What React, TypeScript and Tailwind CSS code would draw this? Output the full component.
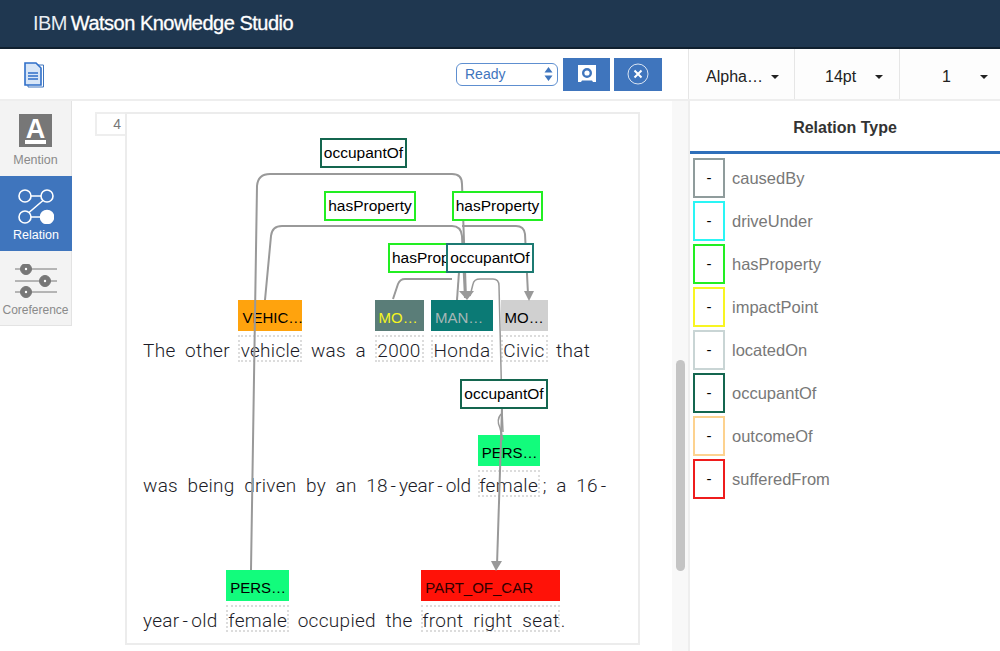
import React from 'react';

const SANS = "font-['Liberation_Sans',Arial,sans-serif]";
const DOC_LINE = "absolute left-[16px] flex items-center gap-[9.5px] font-['Roboto',Arial,sans-serif] text-[19px] font-light leading-[27px] tracking-[0.3px] text-[#1c1c28]";

interface Relation {
  name: string;
  border: string;
}

const relationTypes: Relation[] = [
  { name: 'causedBy', border: 'border-[#8f9c9c]' },
  { name: 'driveUnder', border: 'border-[#2af5f5]' },
  { name: 'hasProperty', border: 'border-[#22ee22]' },
  { name: 'impactPoint', border: 'border-[#f8f522]' },
  { name: 'locatedOn', border: 'border-[#c9d5d5]' },
  { name: 'occupantOf', border: 'border-[#14664f]' },
  { name: 'outcomeOf', border: 'border-[#fdd28f]' },
  { name: 'sufferedFrom', border: 'border-[#ee1c1c]' },
];

// a word of the document, with the dotted box and the mention label over it
const Mention = ({
  word,
  label,
  box,
  width,
}: {
  word: string;
  label: string;
  box: string;
  width: string;
}) => (
  <span className={`relative mx-[-1px] flex h-[27px] -translate-y-[2px] items-center justify-center border-2 border-dotted border-[#dcdcdc] ${width}`}>
    <span className="translate-y-[2px]">{word}</span>
    <span className={`absolute left-[-2px] right-[-2px] top-[-37px] flex h-[31px] items-center overflow-hidden whitespace-nowrap pl-[4px] pt-[4px] text-[15px] leading-none tracking-normal ${SANS} ${box}`}>
      {label}
    </span>
  </span>
);

const RelationLabel = ({ text, className }: { text: string; className: string }) => (
  <div className={`absolute z-20 flex h-[30px] items-center overflow-hidden whitespace-nowrap border-2 bg-white text-[15.5px] text-black ${className}`}>
    {text}
  </div>
);

const Hyphen = () => <span className="mx-[3px]">-</span>;

const Arrows = () => (
  <svg
    className="absolute left-[-127px] top-[-114px] z-10 h-[651px] w-[1000px] pointer-events-none"
    viewBox="0 0 1000 651"
    fill="none"
    stroke="#999999"
    strokeWidth="2"
  >
    <path d="M251 570 L257 186 Q258 174 270 174 L452 174 Q462 174 462 184 L466 298" />
    <path d="M265 300 L271 236 Q272 226 282 226 L452 226 Q461 226 462 236 L465 298" />
    <path d="M462 226 L516 226 Q524 226 525 234 L528 294" />
    <path d="M393 299 L398 284 Q400 279 405 279 L452 279" />
    <path d="M457 300 L459 272" />
    <path d="M470 296 L473 284 Q474 279 480 279 L493 279 Q499 279 499 286 L502 410 L503 432" strokeWidth="1.5" />
    <path d="M502 408 L497 565" />
    <path d="M501 414 Q496 420 500 428 L503 440" strokeWidth="1.5" />
    <g fill="#999999" stroke="none">
      <path d="M459 291 L474 291 L467 300 Z" />
      <path d="M524 291 L534 291 L529 301 Z" />
      <path d="M491 561 L502 561 L496 571 Z" />
    </g>
  </svg>
);

const Sidebar = () => (
  <div className={`w-[72px] shrink-0 ${SANS}`}>
    <div className="flex h-[75px] flex-col items-center border-r border-[#e3e3e3] bg-[#f3f3f3] pt-[13px] text-[12.5px] text-[#8a8a8a]">
      <div className="flex h-[33px] w-[33px] flex-col items-center justify-end bg-[#777777] pb-[3px]">
        <span className="text-[27px] font-bold leading-[22px] text-white">A</span>
        <span className="h-[4px] w-[21px] bg-white" />
      </div>
      <span className="mt-[4px]">Mention</span>
    </div>
    <div className="flex h-[75px] flex-col items-center bg-[#3f75bd] pt-[12px] text-[12.5px] text-white">
      <svg width="36" height="36" viewBox="0 0 36 36" fill="none" stroke="white" strokeWidth="1.6">
        <circle cx="7" cy="8" r="6" />
        <circle cx="29" cy="8" r="6" />
        <circle cx="7" cy="29" r="6" />
        <circle cx="29" cy="29" r="6.5" fill="white" />
        <path d="M13 8 H23 M25 12.5 L11 24.5 M13 29 H23" />
      </svg>
      <span className="mt-[2px]">Relation</span>
    </div>
    <div className="flex h-[75px] flex-col items-center border-b border-r border-[#e3e3e3] bg-[#f3f3f3] pt-[13px] text-[12px] text-[#8a8a8a]">
      <svg width="44" height="36" viewBox="0 0 44 36" fill="none" stroke="#777777" strokeWidth="1">
        <path d="M1 5 H43 M1 17 H43 M1 28 H43" />
        <circle cx="12" cy="5" r="5.5" fill="#777777" />
        <circle cx="31" cy="17" r="5.5" fill="#777777" />
        <circle cx="12" cy="28" r="5.5" fill="#777777" />
        <circle cx="12" cy="5" r="1.2" fill="white" stroke="none" />
        <circle cx="31" cy="17" r="1.2" fill="white" stroke="none" />
        <circle cx="12" cy="28" r="1.2" fill="white" stroke="none" />
      </svg>
      <span className="mt-[1px] whitespace-nowrap">Coreference</span>
    </div>
  </div>
);

const Toolbar = () => (
  <div className={`flex h-[52px] shrink-0 border-b-2 border-[#eeeeee] ${SANS}`}>
    <div className="flex w-[688px] items-center pl-[24px]">
      <svg className="mt-[2px]" width="21" height="26" viewBox="0 0 21 26" fill="none">
        <path d="M4 3 H19.5 V25 H4 Z" fill="white" stroke="#3f75bd" strokeWidth="1" />
        <path d="M1 1 H12 L17 6 V23 H1 Z" fill="#d8e6f7" stroke="#2f6fc9" strokeWidth="1.6" />
        <path d="M4 11 H14 M4 14 H14 M4 17 H14" stroke="#2f6fc9" strokeWidth="1.3" />
      </svg>
      <div className="ml-[411px] flex h-[23px] w-[102px] items-center justify-between rounded-[6px] border border-[#5e8fd0] pl-[8px] pr-[4px] text-[14px] text-[#3f75bd]">
        <span>Ready</span>
        <svg width="9" height="14" viewBox="0 0 9 14" fill="#3f75bd">
          <path d="M4.5 0 L8.5 5.5 H0.5 Z M4.5 14 L0.5 8.5 H8.5 Z" />
        </svg>
      </div>
      <button className="ml-[5px] flex h-[33px] w-[47px] items-center justify-center bg-[#3f75bd]">
        <svg width="18" height="19" viewBox="0 0 18 19">
          <path d="M0 0 H18 V17 H15 L14 15.5 H4 L3 17 H0 Z" fill="white" />
          <circle cx="9" cy="8" r="3.8" fill="none" stroke="#3f75bd" strokeWidth="2.4" />
        </svg>
      </button>
      <button className="ml-[4px] flex h-[33px] w-[48px] items-center justify-center bg-[#3f75bd]">
        <svg width="22" height="22" viewBox="0 0 22 22" fill="none" stroke="white">
          <circle cx="11" cy="11" r="10" strokeOpacity="0.8" />
          <path d="M7.5 7.5 L14.5 14.5 M14.5 7.5 L7.5 14.5" strokeWidth="2" />
        </svg>
      </button>
    </div>
    <div className="flex flex-1 text-[16px] text-[#222222]">
      <div className="flex w-[106px] items-center border-l border-[#e6e6e6] bg-[#fdfdfd] pl-[17px] pt-[5px]">
        Alpha…
        <span className="ml-[8px] h-0 w-0 border-x-[4px] border-t-[4px] border-x-transparent border-t-[#222222]" />
      </div>
      <div className="flex w-[105px] items-center border-l border-[#e6e6e6] bg-[#fdfdfd] pl-[30px] pt-[5px]">
        14pt
        <span className="ml-[19px] h-0 w-0 border-x-[4px] border-t-[4px] border-x-transparent border-t-[#222222]" />
      </div>
      <div className="flex flex-1 items-center border-l border-[#e6e6e6] bg-[#fdfdfd] pl-[42px] pt-[5px]">
        1
        <span className="ml-[29px] h-0 w-0 border-x-[4px] border-t-[4px] border-x-transparent border-t-[#222222]" />
      </div>
    </div>
  </div>
);

const RelationPanel = () => (
  <div className={`w-[312px] shrink-0 border-l-2 border-[#eeeeee] ${SANS}`}>
    <div className="flex h-[53px] items-center justify-center border-b-[3px] border-[#2f6fba] pt-[3px] text-[16px] font-bold text-[#333333]">
      Relation Type
    </div>
    <div className="flex flex-col gap-[3px] pl-[3px] pt-[4px]">
      {relationTypes.map((r) => (
        <div key={r.name} className="flex h-[40px] items-center">
          <div className={`flex h-[40px] w-[32px] items-center justify-center border-2 text-[15px] text-black ${r.border}`}>-</div>
          <span className="ml-[7px] text-[16.5px] text-[#787878]">{r.name}</span>
        </div>
      ))}
    </div>
  </div>
);

const Document = () => (
  <div className="relative h-[533px] w-[515px] border-2 border-[#ececec] bg-white">
    <Arrows />
    <RelationLabel text="occupantOf" className="left-[193px] top-[24px] w-[87px] justify-center border-[#14664f]" />
    <RelationLabel text="hasProperty" className="left-[197px] top-[77px] w-[92px] justify-center border-[#22ee22]" />
    <RelationLabel text="hasProperty" className="left-[325px] top-[77px] w-[91px] justify-center border-[#22ee22]" />
    <RelationLabel text="hasProperty" className="left-[261px] top-[129px] w-[60px] border-[#22ee22] pl-[2px]" />
    <RelationLabel text="occupantOf" className="left-[319px] top-[129px] w-[88px] justify-center border-[#1c7a72]" />
    <RelationLabel text="occupantOf" className="left-[333px] top-[265px] w-[88px] justify-center border-[#14664f]" />

    <div className={`${DOC_LINE} top-[223px]`}>
      <span>The</span>
      <span>other</span>
      <Mention word="vehicle" label="VEHIC…" box="bg-[#ffa30d] text-black" width="w-[64px]" />
      <span>was</span>
      <span>a</span>
      <Mention word="2000" label="MO…" box="bg-[#5a7d78] text-[#f5f520]" width="w-[49px]" />
      <Mention word="Honda" label="MAN…" box="bg-[#0b7a75] text-[#a7b7b7]" width="w-[62px]" />
      <Mention word="Civic" label="MO…" box="bg-[#d0d0d0] text-black" width="w-[47px]" />
      <span>that</span>
    </div>

    <div className={`${DOC_LINE} top-[358px]`}>
      <span>was</span>
      <span>being</span>
      <span>driven</span>
      <span>by</span>
      <span>an</span>
      <span className="mr-[-2px] flex whitespace-nowrap tracking-normal">18<Hyphen />year<Hyphen />old</span>
      <Mention word="female" label="PERS…" box="bg-[#12fc7c] text-black" width="w-[62px]" />
      <span className="ml-[-5.5px]">;</span>
      <span>a</span>
      <span className="flex whitespace-nowrap">16<Hyphen /></span>
    </div>

    <div className={`${DOC_LINE} top-[493px]`}>
      <span className="flex whitespace-nowrap">year<Hyphen />old</span>
      <Mention word="female" label="PERS…" box="bg-[#12fc7c] text-black" width="w-[63px]" />
      <span>occupied</span>
      <span>the</span>
      <Mention word="front  right  seat" label="PART_OF_CAR" box="bg-[#ff1208] text-[#300000]" width="w-[139px] whitespace-pre" />
      <span className="ml-[-8px]">.</span>
    </div>
  </div>
);

const App: React.FC = () => {
  return (
    <div className={`flex h-[651px] w-[1000px] flex-col overflow-hidden bg-white ${SANS}`}>
      <header className="flex h-[49px] shrink-0 items-center border-b-2 border-[#10202f] bg-[#1f3750] pb-[2px] pl-[33px] text-[20px] text-white">
        <span className="font-light tracking-[-0.6px] text-[#e8edf2]">IBM</span>
        <span className="ml-[4px] font-medium tracking-[-0.5px] [-webkit-text-stroke:0.3px_white]">Watson Knowledge Studio</span>
      </header>
      <Toolbar />
      <div className="flex min-h-0 flex-1">
        <Sidebar />
        <div className="flex min-w-0 flex-1 pl-[23px] pt-[11px]">
          <div className="flex h-[24px] w-[30px] shrink-0 items-center justify-end border-2 border-r-0 border-[#eeeeee] pr-[4px] text-[14px] text-[#777777]">
            4
          </div>
          <Document />
          <div className="ml-auto mt-[-11px] w-[16px] shrink-0 bg-[#f8f8f8] pl-[4px] pt-[259px]">
            <div className="h-[211px] w-[9px] rounded-[5px] bg-[#c4c4c4]" />
          </div>
        </div>
        <RelationPanel />
      </div>
    </div>
  );
};

export default App;
